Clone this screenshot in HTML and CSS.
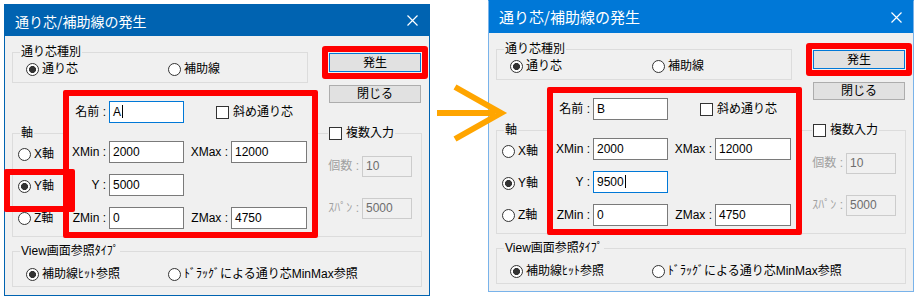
FILE: index.html
```html
<!DOCTYPE html>
<html lang="ja">
  <head>
    <meta charset="UTF-8" />
    <title>通り芯/補助線の発生</title>
    <link rel="stylesheet" href="styles.css">
  </head>
  <body>
    <div class="page">
      <section class="dialog dialog-back">
        <header class="titlebar">
          <span class="title">通り芯/補助線の発生</span>
          <svg class="close" width="11" height="11" viewBox="0 0 11 11"><path d="M0.5 0.5L10.5 10.5M10.5 0.5L0.5 10.5" stroke="#fff" stroke-width="1.2"/></svg>
        </header>
        <div class="body">
          <div class="top-row">
            <fieldset class="group kind">
              <legend>通り芯種別</legend>
              <div class="options">
                <label class="opt"><span class="radio on"></span>通り芯</label>
                <label class="opt"><span class="radio"></span>補助線</label>
              </div>
            </fieldset>
            <div class="buttons">
              <div class="mark-box"><button class="btn btn-default">発生</button></div>
              <button class="btn btn-close">閉じる</button>
            </div>
          </div>
          <div class="mid-row">
            <fieldset class="group axis">
              <legend>軸</legend>
              <div class="axis-list">
                <label class="opt"><span class="radio"></span>X軸</label>
                <label class="opt mark"><span class="radio on"></span>Y軸</label>
                <label class="opt"><span class="radio"></span>Z軸</label>
              </div>
            </fieldset>
            <div class="params">
              <div class="lbl">名前 :</div>
              <div class="field focus">A<span class="caret"></span></div>
              <label class="diag"><span class="check"></span>斜め通り芯</label>
              <div class="lbl">XMin :</div>
              <div class="field">2000</div>
              <div class="lbl">XMax :</div>
              <div class="field">12000</div>
              <div class="lbl">Y :</div>
              <div class="field">5000</div>
              <div></div><div></div>
              <div class="lbl">ZMin :</div>
              <div class="field">0</div>
              <div class="lbl">ZMax :</div>
              <div class="field">4750</div>
            </div>
            <fieldset class="group multi">
              <legend><span class="check"></span>複数入力</legend>
              <div class="multi-grid">
                <div class="lbl dim">個数 :</div>
                <div class="field off">10</div>
                <div class="lbl dim">ｽﾊﾟﾝ :</div>
                <div class="field off">5000</div>
              </div>
            </fieldset>
          </div>
          <fieldset class="group view">
            <legend>View画面参照ﾀｲﾌﾟ</legend>
            <div class="options">
              <label class="opt"><span class="radio on"></span>補助線ﾋｯﾄ参照</label>
              <label class="opt"><span class="radio"></span>ﾄﾞﾗｯｸﾞによる通り芯MinMax参照</label>
            </div>
          </fieldset>
        </div>
      </section>

      <div class="arrow">
        <svg width="80" height="60" viewBox="0 0 80 60"><path d="M2 29H60M20 3L66 29L20 55" fill="none" stroke="#ffa500" stroke-width="6"/></svg>
      </div>

      <section class="dialog dialog-front">
        <header class="titlebar">
          <span class="title">通り芯/補助線の発生</span>
          <svg class="close" width="11" height="11" viewBox="0 0 11 11"><path d="M0.5 0.5L10.5 10.5M10.5 0.5L0.5 10.5" stroke="#fff" stroke-width="1.2"/></svg>
        </header>
        <div class="body">
          <div class="top-row">
            <fieldset class="group kind">
              <legend>通り芯種別</legend>
              <div class="options">
                <label class="opt"><span class="radio on"></span>通り芯</label>
                <label class="opt"><span class="radio"></span>補助線</label>
              </div>
            </fieldset>
            <div class="buttons">
              <div class="mark-box"><button class="btn btn-default">発生</button></div>
              <button class="btn btn-close">閉じる</button>
            </div>
          </div>
          <div class="mid-row">
            <fieldset class="group axis">
              <legend>軸</legend>
              <div class="axis-list">
                <label class="opt"><span class="radio"></span>X軸</label>
                <label class="opt"><span class="radio on"></span>Y軸</label>
                <label class="opt"><span class="radio"></span>Z軸</label>
              </div>
            </fieldset>
            <div class="params">
              <div class="lbl">名前 :</div>
              <div class="field">B</div>
              <label class="diag"><span class="check"></span>斜め通り芯</label>
              <div class="lbl">XMin :</div>
              <div class="field">2000</div>
              <div class="lbl">XMax :</div>
              <div class="field">12000</div>
              <div class="lbl">Y :</div>
              <div class="field focus">9500<span class="caret"></span></div>
              <div></div><div></div>
              <div class="lbl">ZMin :</div>
              <div class="field">0</div>
              <div class="lbl">ZMax :</div>
              <div class="field">4750</div>
            </div>
            <fieldset class="group multi">
              <legend><span class="check"></span>複数入力</legend>
              <div class="multi-grid">
                <div class="lbl dim">個数 :</div>
                <div class="field off">10</div>
                <div class="lbl dim">ｽﾊﾟﾝ :</div>
                <div class="field off">5000</div>
              </div>
            </fieldset>
          </div>
          <fieldset class="group view">
            <legend>View画面参照ﾀｲﾌﾟ</legend>
            <div class="options">
              <label class="opt"><span class="radio on"></span>補助線ﾋｯﾄ参照</label>
              <label class="opt"><span class="radio"></span>ﾄﾞﾗｯｸﾞによる通り芯MinMax参照</label>
            </div>
          </fieldset>
        </div>
      </section>
    </div>
  </body>
</html>
```

FILE: styles.css
```css
* {
  box-sizing: border-box;
}

body {
  margin: 0;
  background: #fff;
  color: #000;
  font: 12px/14px "Liberation Sans", "Noto Sans CJK JP", sans-serif;
}

.page {
  display: flex;
  align-items: flex-start;
  width: 919px;
  height: 300px;
  overflow: hidden;
}

.dialog {
  width: 426px;
  height: 292px;
  background: #f0f0f0;
  border: 1px solid #0063b1;
  position: relative;
}
.dialog-back {
  margin: 4px 0 0 4px;
}
.dialog-front {
  border-color: #0078d7 #79b3ea #79b3ea #79b3ea;
}

.titlebar {
  height: 31px;
  padding: 0 11px 0 10px;
  display: flex;
  align-items: center;
  justify-content: space-between;
  background: #0063b1;
  color: #fff;
  font-family: "Noto Sans CJK JP", sans-serif;
  font-size: 14px;
}
.dialog-front .titlebar {
  background: #0078d7;
  font-size: 15px;
  height: 32px;
}

.body {
  padding-left: 7px;
}

/* group boxes */
.group {
  margin: 0;
  padding: 0 0 0 7px;
  border: 1px solid #dcdcdc;
  min-width: 0;
}
.group legend {
  padding: 0 1px;
  line-height: 14px;
}

.options {
  display: flex;
  margin-top: 3px;
}
.opt {
  display: inline-flex;
  align-items: center;
  gap: 3px;
  height: 14px;
  white-space: nowrap;
}
.options .opt:first-child {
  margin-left: 6px;
  width: 142px;
}

.radio {
  width: 13px;
  height: 13px;
  border: 1px solid #333;
  border-radius: 50%;
  background: #fff;
}
.radio.on {
  background: radial-gradient(circle, #333 0 3.2px, #fff 3.8px);
}
.check {
  display: inline-block;
  width: 13px;
  height: 13px;
  border: 1px solid #333;
  background: #fff;
}

/* top */
.top-row {
  display: flex;
  height: 54px;
}
.kind {
  width: 296px;
  margin-top: 9px;
  padding-bottom: 6px;
  align-self: flex-start;
}
.buttons {
  display: flex;
  flex-direction: column;
  margin: 10px 0 0 14px;
  width: 106px;
}
.mark-box {
  border: 6px solid #f00;
  border-radius: 3px;
  padding: 1px;
}
.btn {
  width: 92px;
  height: 19px;
  padding: 0;
  background: #e1e1e1;
  border: 1px solid #adadad;
  font: inherit;
  line-height: 16px;
  color: #000;
}
.btn-default {
  border-color: #0078d7;
}
.btn-close {
  height: 21px;
  margin: 6px 0 0 7px;
}

/* middle */
.mid-row {
  display: flex;
  height: 148px;
}
.axis {
  width: 51px;
  margin-top: 36px;
  padding-bottom: 11px;
  border-right: none;
  align-self: flex-start;
}
.axis-list {
  display: flex;
  flex-direction: column;
  gap: 18px;
  margin-top: 7px;
}
.axis-list .opt {
  margin-left: -2px;
}
.mark {
  position: relative;
}
.mark::before {
  content: "";
  position: absolute;
  left: -14px;
  top: -10px;
  width: 59px;
  height: 31px;
  border: 6px solid #f00;
  border-radius: 2px;
}

.params {
  width: 255px;
  height: 148px;
  border: 6px solid #f00;
  border-radius: 2px;
  padding-top: 5px;
  display: grid;
  grid-template-columns: 40px 75px 47px 76px;
  grid-template-rows: 40px 33px 33px 22px;
  align-items: start;
  position: relative;
  z-index: 1;
}
.lbl {
  line-height: 22px;
  text-align: right;
  padding-right: 3px;
  white-space: nowrap;
}
.field {
  height: 22px;
  border: 1px solid #7a7a7a;
  background: #fff;
  padding-left: 3px;
  line-height: 20px;
}
.field.focus {
  border-color: #0078d7;
}
.caret {
  display: inline-block;
  width: 1px;
  height: 13px;
  margin-left: 1px;
  background: #000;
  vertical-align: -2px;
}
.diag {
  grid-column: 3 / 5;
  display: flex;
  align-items: center;
  gap: 4px;
  height: 22px;
  padding-left: 32px;
}

.multi {
  width: 104px;
  margin-top: 36px;
  padding: 0 0 17px 0;
  border-left: none;
  align-self: flex-start;
}
.multi legend {
  display: flex;
  align-items: center;
  gap: 4px;
  margin-left: 10px;
}
.multi-grid {
  display: grid;
  grid-template-columns: 44px 50px;
  grid-template-rows: 21px 21px;
  row-gap: 21px;
  margin-top: 16px;
}
.multi-grid .lbl {
  line-height: 21px;
}
.dim {
  color: #a0a0a0;
}
.field.off {
  height: 21px;
  line-height: 19px;
  background: #f0f0f0;
  border-color: #cccccc;
  color: #6d6d6d;
}

/* bottom */
.view {
  width: 410px;
  margin-top: 6px;
  padding-bottom: 5px;
}
.view .options {
  margin-top: 9px;
}

.arrow {
  width: 58px;
  position: relative;
  z-index: 2;
}
.arrow svg {
  display: block;
  margin: 84px 0 0 5px;
  overflow: visible;
}
```
